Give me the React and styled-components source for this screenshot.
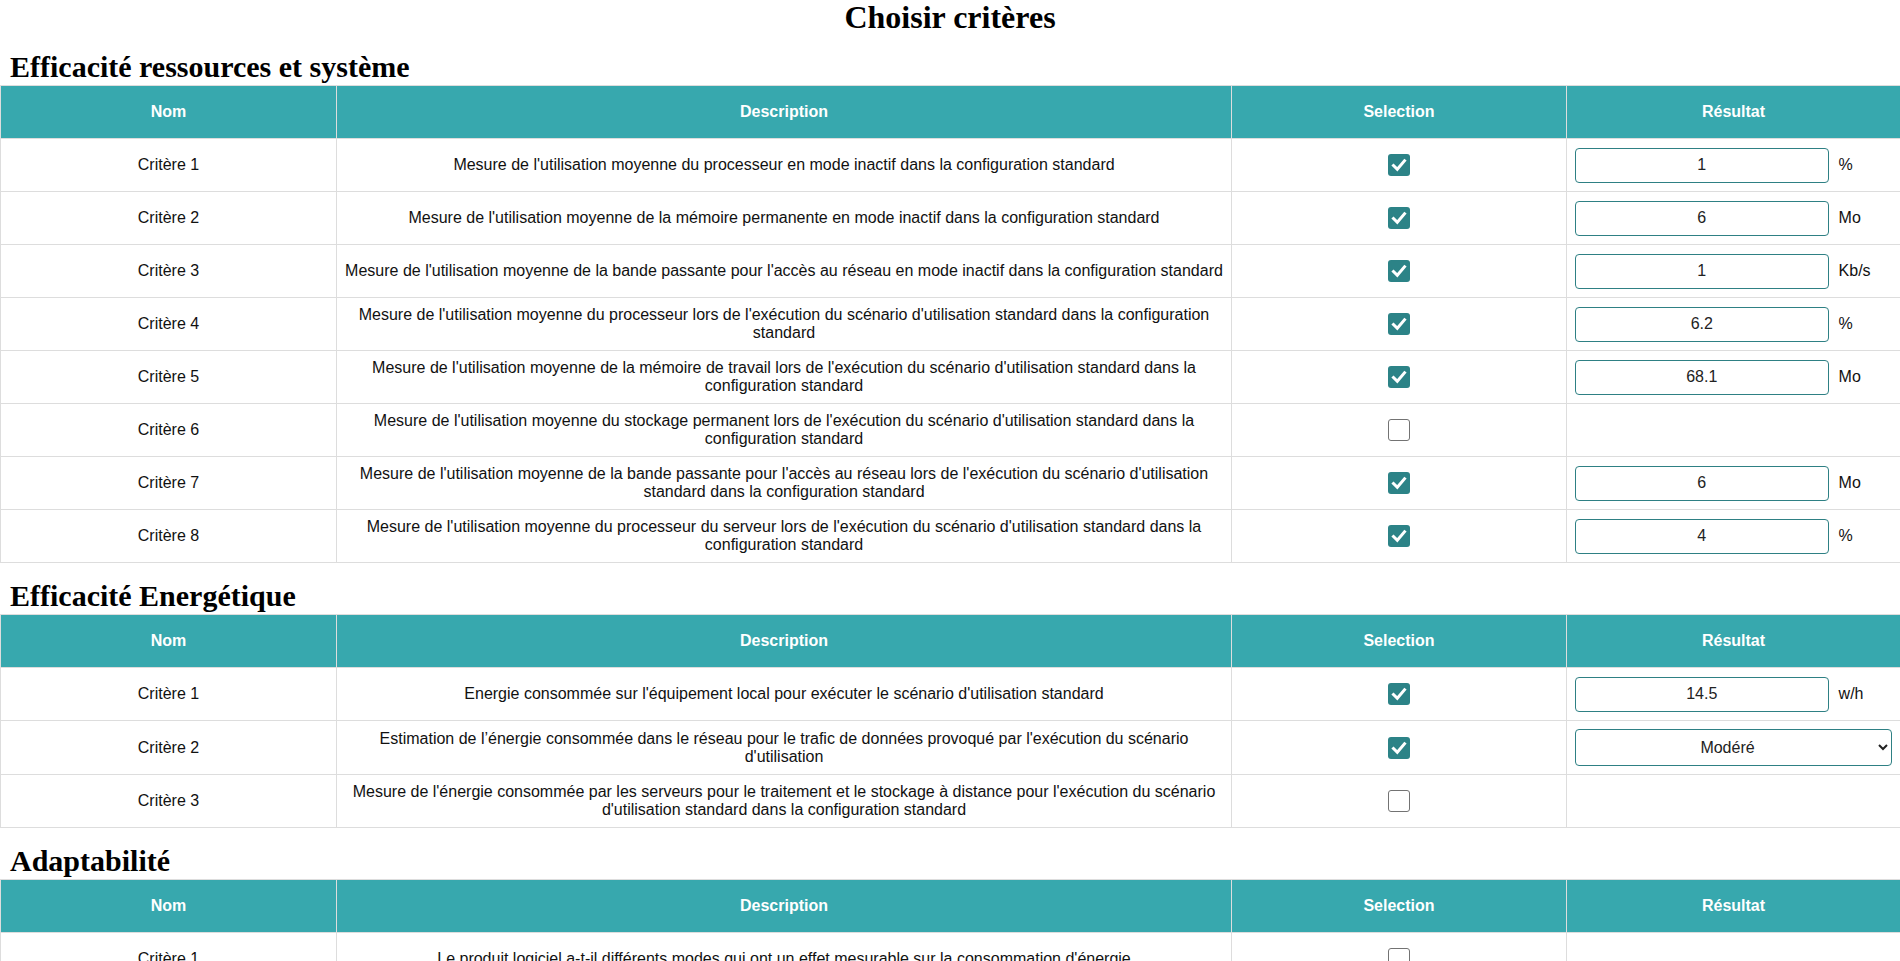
import React from 'react';
import styled, { createGlobalStyle } from 'styled-components';

const GlobalStyle = createGlobalStyle`
  html, body { margin: 0; padding: 0; background: #fff; }
  body { font-family: "Liberation Serif", "Times New Roman", serif; color: #000; }
`;

const Page = styled.main`
  display: block;
`;

const Title = styled.h1`
  margin: 0;
  font-size: 32px;
  line-height: 34px;
  font-weight: bold;
  text-align: center;
`;

const Section = styled.section`
  display: block;
`;

const SectionTitle = styled.h2`
  margin: 16px 0 1px;
  padding-left: 10px;
  font-size: 30px;
  line-height: 34px;
  font-weight: bold;
`;

const Table = styled.table`
  width: 100%;
  border-collapse: collapse;
  table-layout: fixed;
  font-family: "Liberation Sans", Arial, sans-serif;
  font-size: 16px;
  color: #111;
`;

const Col = styled.col`
  width: ${p => p.$w}px;
`;

const HeadCell = styled.th`
  background: #37a8ae;
  color: #fff;
  font-weight: bold;
  border: 1px solid #ddd;
  height: 36px;
  padding: 8px 4px;
  line-height: 18px;
  text-align: center;
`;

const Cell = styled.td`
  border: 1px solid #ddd;
  height: 36px;
  padding: ${p => (p.$left ? '8px' : '8px 4px')};
  line-height: 18px;
  text-align: ${p => (p.$left ? 'left' : 'center')};
  vertical-align: middle;
`;

const CheckBox = styled.span`
  display: inline-flex;
  align-items: center;
  justify-content: center;
  width: 22px;
  height: 22px;
  box-sizing: border-box;
  border-radius: 3px;
  vertical-align: middle;
  background: ${p => (p.$on ? '#2c8387' : '#fff')};
  border: ${p => (p.$on ? 'none' : '1.5px solid #737373')};
`;

const ValueInput = styled.input`
  width: 80%;
  height: 35px;
  box-sizing: border-box;
  border: 1px solid #2e8084;
  border-radius: 4px;
  padding: 0 4px;
  text-align: center;
  font-family: "Liberation Sans", Arial, sans-serif;
  font-size: 16px;
  color: #222;
  background: #fff;
  vertical-align: middle;
  outline: none;
`;

const Unit = styled.span`
  margin-left: 10px;
  vertical-align: middle;
`;

const ValueSelect = styled.select`
  width: 100%;
  height: 37px;
  box-sizing: border-box;
  border: 1px solid #2e8084;
  border-radius: 4px;
  background: #fff;
  font-family: "Liberation Sans", Arial, sans-serif;
  font-size: 16px;
  color: #222;
  text-align: center;
  text-align-last: center;
  vertical-align: middle;
  outline: none;
`;

const sections = [
  {
    title: 'Efficacité ressources et système',
    rows: [
      { d: "Mesure de l'utilisation moyenne du processeur en mode inactif dans la configuration standard", on: true, v: '1', u: '%' },
      { d: "Mesure de l'utilisation moyenne de la mémoire permanente en mode inactif dans la configuration standard", on: true, v: '6', u: 'Mo' },
      { d: "Mesure de l'utilisation moyenne de la bande passante pour l'accès au réseau en mode inactif dans la configuration standard", on: true, v: '1', u: 'Kb/s' },
      { d: "Mesure de l'utilisation moyenne du processeur lors de l'exécution du scénario d'utilisation standard dans la configuration standard", on: true, v: '6.2', u: '%' },
      { d: "Mesure de l'utilisation moyenne de la mémoire de travail lors de l'exécution du scénario d'utilisation standard dans la configuration standard", on: true, v: '68.1', u: 'Mo' },
      { d: "Mesure de l'utilisation moyenne du stockage permanent lors de l'exécution du scénario d'utilisation standard dans la configuration standard", on: false },
      { d: "Mesure de l'utilisation moyenne de la bande passante pour l'accès au réseau lors de l'exécution du scénario d'utilisation standard dans la configuration standard", on: true, v: '6', u: 'Mo' },
      { d: "Mesure de l'utilisation moyenne du processeur du serveur lors de l'exécution du scénario d'utilisation standard dans la configuration standard", on: true, v: '4', u: '%' },
    ],
  },
  {
    title: 'Efficacité Energétique',
    rows: [
      { d: "Energie consommée sur l'équipement local pour exécuter le scénario d'utilisation standard", on: true, v: '14.5', u: 'w/h' },
      { d: "Estimation de l’énergie consommée dans le réseau pour le trafic de données provoqué par l'exécution du scénario d'utilisation", on: true, select: 'Modéré' },
      { d: "Mesure de l'énergie consommée par les serveurs pour le traitement et le stockage à distance pour l'exécution du scénario d'utilisation standard dans la configuration standard", on: false },
    ],
  },
  {
    title: 'Adaptabilité',
    rows: [
      { d: "Le produit logiciel a-t-il différents modes qui ont un effet mesurable sur la consommation d'énergie", on: false },
      { d: "Le produit logiciel peut-il être adapté aux besoins de l'utilisateur afin de réduire la consommation d'énergie", on: false },
    ],
  },
];

function Check({ on }) {
  return (
    <CheckBox $on={on} role="checkbox" aria-checked={on}>
      {on && (
        <svg width="22" height="22" viewBox="0 0 22 22">
          <polyline points="5.5,11.5 9.3,15.3 16.5,6.8" fill="none" stroke="#fff" strokeWidth="3" strokeLinecap="square" strokeLinejoin="miter" />
        </svg>
      )}
    </CheckBox>
  );
}

function Result({ row }) {
  if (!row.on) return null;
  if (row.select) {
    return (
      <ValueSelect defaultValue={row.select}>
        <option>Faible</option>
        <option>Modéré</option>
        <option>Élevé</option>
      </ValueSelect>
    );
  }
  return (
    <>
      <ValueInput type="text" defaultValue={row.v} />
      <Unit>{row.u}</Unit>
    </>
  );
}

function CriteriaTable({ rows }) {
  return (
    <Table>
      <colgroup>
        <Col $w={336} />
        <Col $w={895} />
        <Col $w={335} />
        <Col $w={334} />
      </colgroup>
      <thead>
        <tr>
          <HeadCell>Nom</HeadCell>
          <HeadCell>Description</HeadCell>
          <HeadCell>Selection</HeadCell>
          <HeadCell>Résultat</HeadCell>
        </tr>
      </thead>
      <tbody>
        {rows.map((r, i) => (
          <tr key={i}>
            <Cell>Critère {i + 1}</Cell>
            <Cell>{r.d}</Cell>
            <Cell><Check on={r.on} /></Cell>
            <Cell $left><Result row={r} /></Cell>
          </tr>
        ))}
      </tbody>
    </Table>
  );
}

export default function App() {
  return (
    <Page>
      <GlobalStyle />
      <Title>Choisir critères</Title>
      {sections.map(s => (
        <Section key={s.title}>
          <SectionTitle>{s.title}</SectionTitle>
          <CriteriaTable rows={s.rows} />
        </Section>
      ))}
    </Page>
  );
}
